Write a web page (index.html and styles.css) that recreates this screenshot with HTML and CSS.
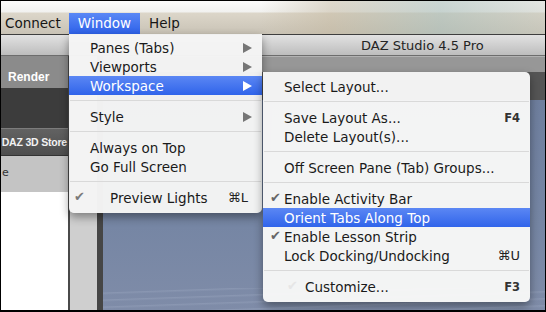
FILE: index.html
```html
<!DOCTYPE html>
<html lang="en">
<head>
    <meta charset="UTF-8">
    <title>DAZ Studio 4.5 Pro - Window menu</title>
    <link rel="stylesheet" href="styles.css">
</head>
<body>
    <div class="screen">
        <div class="menubar">
            <span class="mb-item first">Connect</span>
            <span class="mb-item active">Window</span>
            <span class="mb-item">Help</span>
        </div>

        <div class="titlebar">
            <span class="title">DAZ Studio 4.5 Pro</span>
        </div>

        <div class="workarea">
            <div class="sidepanel">
                <div class="render-tab">Render</div>
                <div class="side-dark"></div>
                <div class="store-btn">DAZ 3D Store</div>
                <div class="side-gray">e</div>
                <div class="side-white"></div>
            </div>
            <div class="strip"></div>
            <div class="viewport">
                <div class="vp-bar"></div>
                <div class="vp-dark"></div>
                <div class="vp-scene"></div>
            </div>
        </div>

        <!-- Window menu -->
        <div class="menu window-menu">
            <div class="item"><span class="label">Panes (Tabs)</span><span class="arrow"></span></div>
            <div class="item"><span class="label">Viewports</span><span class="arrow"></span></div>
            <div class="item selected"><span class="label">Workspace</span><span class="arrow"></span></div>
            <div class="sep"></div>
            <div class="item"><span class="label">Style</span><span class="arrow"></span></div>
            <div class="sep"></div>
            <div class="item"><span class="label">Always on Top</span></div>
            <div class="item"><span class="label">Go Full Screen</span></div>
            <div class="sep"></div>
            <div class="item indent"><span class="check">✔</span><span class="label">Preview Lights</span><span class="key">⌘L</span></div>
        </div>

        <!-- Workspace submenu -->
        <div class="menu sub-menu">
            <div class="item"><span class="label">Select Layout...</span></div>
            <div class="sep"></div>
            <div class="item"><span class="label">Save Layout As...</span><span class="key fkey">F4</span></div>
            <div class="item"><span class="label">Delete Layout(s)...</span></div>
            <div class="sep"></div>
            <div class="item"><span class="label">Off Screen Pane (Tab) Groups...</span></div>
            <div class="sep"></div>
            <div class="item"><span class="check">✔</span><span class="label">Enable Activity Bar</span></div>
            <div class="item selected"><span class="label">Orient Tabs Along Top</span></div>
            <div class="item"><span class="check">✔</span><span class="label">Enable Lesson Strip</span></div>
            <div class="item"><span class="label">Lock Docking/Undocking</span><span class="key">⌘U</span></div>
            <div class="sep"></div>
            <div class="item indent"><span class="check faint">✔</span><span class="label">Customize...</span><span class="key fkey">F3</span></div>
        </div>
    </div>
</body>
</html>
```
FILE: styles.css
```css
body {
    margin: 0;
    background: #000;
}

.screen {
    position: relative;
    width: 546px;
    height: 312px;
    box-sizing: border-box;
    border: 1px solid #000;
    border-bottom-width: 2px;
    display: flex;
    flex-direction: column;
    overflow: hidden;
    font-family: "DejaVu Sans", sans-serif;
}

/* system menu bar */
.menubar {
    height: 21px;
    padding-top: 12px;
    display: flex;
    border-bottom: 1px solid #3e3e3e;
    background:
        linear-gradient(to right, rgba(214, 205, 186, 0) 0, rgba(214, 205, 186, 0) 260px, rgba(196, 184, 160, 0.5) 330px, rgba(170, 190, 186, 0.6) 440px, rgba(196, 200, 190, 0.4) 546px),
        linear-gradient(#fbfbfb 0, #f1f1ef 11px, #dcd6c9 12px, #c9c3b6 100%);
}

.mb-item {
    padding: 0 9px;
    font-size: 13.5px;
    line-height: 21px;
    color: #161616;
}

.mb-item.first {
    padding-left: 4px;
    padding-right: 8px;
}

.mb-item.active {
    color: #fff;
    background: linear-gradient(#5a88f5, #2d61ea);
}

/* window title bar */
.titlebar {
    height: 20px;
    border-bottom: 1px solid #6d6d6d;
    background: linear-gradient(#e2e2e2, #bdbdbd);
}

.title {
    display: block;
    padding-left: 360px;
    font-size: 13px;
    line-height: 21px;
    color: #242424;
}

/* application area */
.workarea {
    flex: 1;
    display: flex;
}

.sidepanel {
    width: 67px;
    display: flex;
    flex-direction: column;
}

.render-tab {
    height: 32px;
    box-sizing: border-box;
    padding: 15px 0 0 7px;
    background: #8b8b8b;
    color: #fff;
    font: bold 12px "Liberation Sans", sans-serif;
    line-height: 13px;
}

.side-dark {
    height: 40px;
    background: #3c3c3c;
}

.store-btn {
    height: 28px;
    box-sizing: border-box;
    padding-right: 1px;
    border-top: 1px solid #7c7c7c;
    border-bottom: 1px solid #333;
    background: linear-gradient(#626262, #4e4e4e);
    color: #f2f2f2;
    font: bold 10.5px "Liberation Sans", sans-serif;
    letter-spacing: -0.2px;
    line-height: 26px;
    text-align: right;
    white-space: nowrap;
}

.side-gray {
    height: 36px;
    box-sizing: border-box;
    padding: 10px 0 0 1px;
    background: #c4c4c4;
    color: #333;
    font-size: 11px;
}

.side-white {
    flex: 1;
    background: #fff;
}

.strip {
    width: 27px;
    border-left: 2px solid #4a4a4a;
    border-right: 6px solid #464646;
    background: #cfcfcf;
}

.viewport {
    flex: 1;
    display: flex;
    flex-direction: column;
}

.vp-bar {
    height: 16px;
    border-top: 1px solid #b2b2b2;
    box-sizing: border-box;
    background: #979797;
}

.vp-dark {
    height: 28px;
    background: #555;
}

.vp-scene {
    flex: 1;
    background:
        repeating-linear-gradient(178deg, rgba(255, 255, 255, 0) 0, rgba(255, 255, 255, 0) 4px, rgba(160, 172, 196, 0.35) 5px, rgba(255, 255, 255, 0) 7px) 0 188px / 100% 30px no-repeat,
        linear-gradient(#6f7f9e 0, #7686a4 60%, #7f8ca8 100%);
}

/* menus */
.menu {
    position: absolute;
    box-sizing: border-box;
    background: rgba(244, 244, 244, 0.98);
    color: #1a1a1a;
    font-size: 13.5px;
    box-shadow: 0 4px 10px rgba(0, 0, 0, 0.4);
}

.window-menu {
    left: 68px;
    top: 33px;
    width: 193px;
    padding: 4px 0 6px;
    border-radius: 0 0 5px 5px;
}

.sub-menu {
    left: 262px;
    top: 71px;
    width: 267px;
    padding: 5px 0 6px;
    border-radius: 0 5px 5px 5px;
    background: rgba(246, 246, 246, 0.98);
}

.item {
    position: relative;
    height: 19px;
    display: flex;
    align-items: center;
    padding: 0 10px 0 21px;
    white-space: nowrap;
}

.item.indent {
    padding-left: 41px;
}

.sub-menu .item.indent {
    padding-left: 42px;
}

.item.selected {
    color: #fff;
    background: linear-gradient(#5b87f4, #3064ea);
}

.label {
    flex: 1;
}

.key {
    font-size: 13px;
    color: #222;
}

.window-menu .key {
    margin-right: 4px;
}

.fkey {
    font-size: 11.5px;
    font-weight: bold;
    color: #333;
}

.check {
    position: absolute;
    left: 5px;
    top: 1px;
    font-size: 13px;
    color: #7a7a7a;
}

.sub-menu .check {
    left: 7px;
    color: #666;
}

.check.faint {
    left: 24px;
    color: #e6e6e6;
}

.arrow {
    width: 0;
    height: 0;
    border-top: 5px solid transparent;
    border-bottom: 5px solid transparent;
    border-left: 9px solid #767676;
}

.item.selected .arrow {
    border-left-color: #fff;
}

.sep {
    height: 1px;
    margin: 5px 1px 6px;
    background: #d9d9d9;
}
```
